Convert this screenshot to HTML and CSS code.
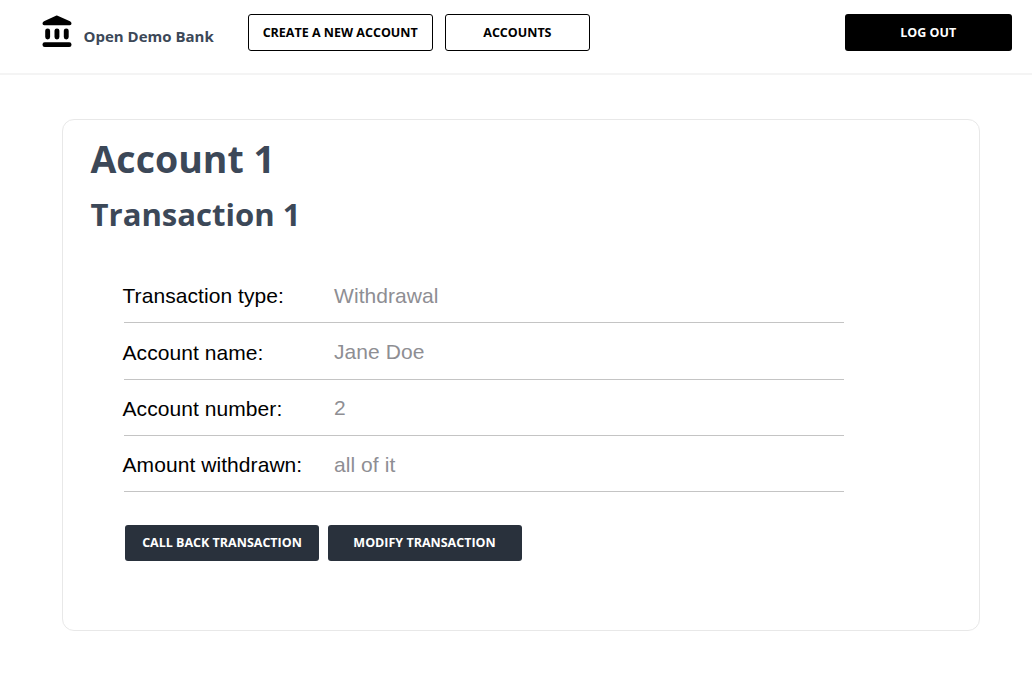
FILE: index.html
```html
<!DOCTYPE html>
<html lang="en">
<head>
<meta charset="utf-8">
<title>Open Demo Bank</title>
<link rel="stylesheet" href="styles.css">
</head>
<body>
<header class="topbar">
  <div class="brand">
    <svg class="brand-icon" viewBox="0 0 30 33" aria-hidden="true">
      <path d="M14.5 0.6 Q15 0.4 15.6 0.7 L28 6.2 Q29.5 7.1 29.5 8.5 Q29.5 10.3 27.8 10.3 H2.2 Q0.5 10.3 0.5 8.5 Q0.5 7.1 2 6.2 Z"/>
      <rect x="3.2" y="13.4" width="4.9" height="11" rx="2.4"/>
      <rect x="12.5" y="13.4" width="4.9" height="11" rx="2.4"/>
      <rect x="21.8" y="13.4" width="4.9" height="11" rx="2.4"/>
      <rect x="0.5" y="27.3" width="29" height="4.6" rx="2.2"/>
    </svg>
    <span class="brand-name">Open Demo Bank</span>
  </div>
  <nav class="nav">
    <button class="btn btn-outline btn-create">CREATE A NEW ACCOUNT</button>
    <button class="btn btn-outline btn-accounts">ACCOUNTS</button>
  </nav>
  <button class="btn btn-logout">LOG OUT</button>
</header>
<main class="card">
  <h1 class="title">Account 1</h1>
  <h2 class="subtitle">Transaction 1</h2>
  <dl class="details">
    <div class="row"><dt class="label">Transaction type:</dt><dd class="value">Withdrawal</dd></div>
    <div class="row row-low"><dt class="label">Account name:</dt><dd class="value">Jane Doe</dd></div>
    <div class="row row-number"><dt class="label">Account number:</dt><dd class="value">2</dd></div>
    <div class="row"><dt class="label">Amount withdrawn:</dt><dd class="value">all of it</dd></div>
  </dl>
  <div class="actions">
    <button class="btn btn-dark">CALL BACK TRANSACTION</button>
    <button class="btn btn-dark">MODIFY TRANSACTION</button>
  </div>
</main>
</body>
</html>
```
FILE: styles.css
```css
* { box-sizing: border-box; }
body {
  margin: 0;
  background: #fff;
  font-family: "Open Sans", sans-serif;
}
.topbar {
  display: flex;
  align-items: flex-start;
  height: 75px;
  padding: 14px 20.5px 0 41.5px;
  background: #fff;
  border-bottom: 2px solid #f4f4f4;
}
.brand { display: flex; width: 206px; }
.brand-icon { width: 30px; height: 33px; margin-top: 1px; }
.brand-name {
  margin: 12px 0 0 12px;
  font-size: 15px;
  line-height: 20px;
  font-weight: 700;
  color: #3c4858;
  white-space: nowrap;
}
.nav { display: flex; gap: 12px; }
.btn {
  height: 37px;
  padding: 0 0 1px;
  border: 0;
  border-radius: 3px;
  font-family: inherit;
  font-size: 12.5px;
  font-weight: 700;
  white-space: nowrap;
}
.btn-outline { background: #fff; color: #000; border: 1.5px solid #000; }
.btn-create { width: 185.4px; }
.btn-accounts { width: 145px; }
.btn-logout { width: 166.5px; margin-left: auto; background: #000; color: #fff; }
.btn-dark { width: 194px; height: 36px; background: #29313c; color: #fff; }
.card {
  width: 918px;
  height: 512px;
  margin: 44px 0 0 62px;
  padding: 12px 28px;
  border: 1px solid #e8e8e8;
  border-radius: 12px;
}
.title, .subtitle { margin: 0 0 0 -0.5px; font-weight: 700; color: #3c4858; }
.title { font-size: 37.5px; line-height: 54px; }
.subtitle { font-size: 31.1px; line-height: 56px; }
.details {
  width: 720px;
  margin: 25px 0 0 33px;
  font-family: "Liberation Sans", Arial, sans-serif;
  font-size: 21px;
  letter-spacing: 0.07px;
}
.row {
  display: flex;
  align-items: flex-start;
  height: 56.25px;
  padding-top: 17px;
  border-bottom: 1px solid #c4c4c4;
  line-height: 24px;
}
.row-number { padding-top: 16px; }
.label { width: 211.5px; margin-left: -1.5px; color: #000; white-space: nowrap; }
.value { margin: 0; color: #8e8e93; }
.row-low .label, .row-number .label { padding-top: 1px; }
.actions { display: flex; gap: 8.5px; margin: 32.5px 0 0 34px; }
```
